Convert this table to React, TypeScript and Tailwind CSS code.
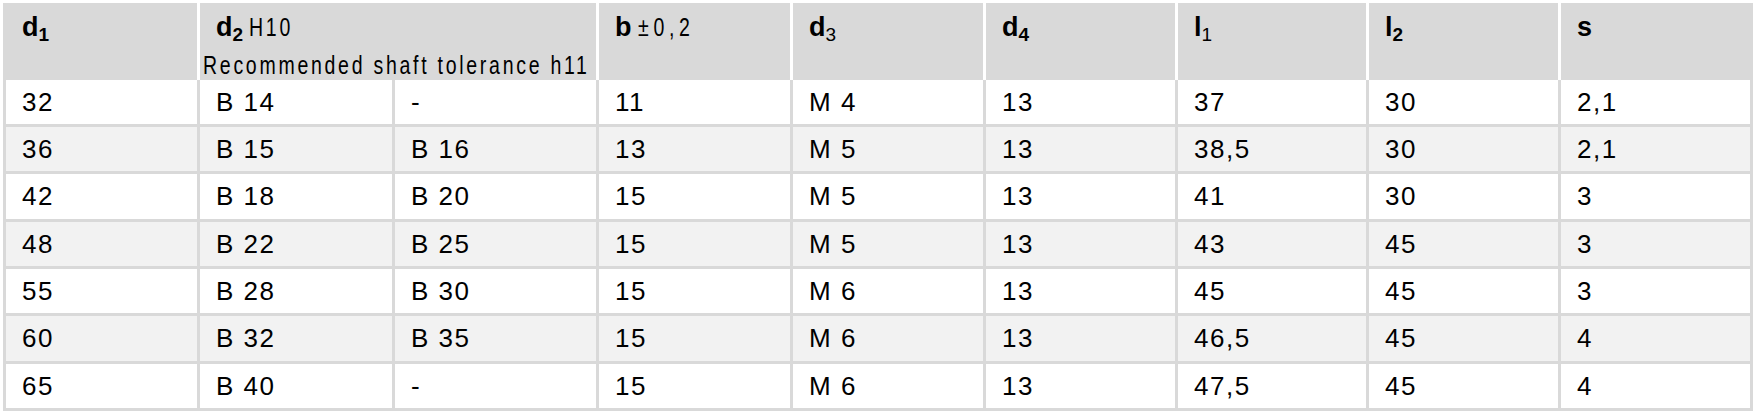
const rows = [
  ["32", "B 14", "-", "11", "M 4", "13", "37", "30", "2,1"],
  ["36", "B 15", "B 16", "13", "M 5", "13", "38,5", "30", "2,1"],
  ["42", "B 18", "B 20", "15", "M 5", "13", "41", "30", "3"],
  ["48", "B 22", "B 25", "15", "M 5", "13", "43", "45", "3"],
  ["55", "B 28", "B 30", "15", "M 6", "13", "45", "45", "3"],
  ["60", "B 32", "B 35", "15", "M 6", "13", "46,5", "45", "4"],
  ["65", "B 40", "-", "15", "M 6", "13", "47,5", "45", "4"],
];

// row heights alternate a little so the lines fall where the drawing has them
const rowH = ["h-[47px]", "h-[47px]", "h-[48px]", "h-[47px]", "h-[47px]", "h-[48px]", "h-[47px]"];

const sans = "font-['Liberation_Sans',Arial,sans-serif]";
// condensed look for the tolerance notes
const narrow = `${sans} inline-block origin-left scale-x-[0.78] font-normal text-[25px] whitespace-nowrap`;

function Sym({ main, sub, subBold = true }: { main: string; sub?: string; subBold?: boolean }) {
  return (
    <span className={`${sans} font-bold text-[27px]`}>
      {main}
      {sub && <sub className={`text-[19px] ${subBold ? "font-bold" : "font-normal"}`}>{sub}</sub>}
    </span>
  );
}

export default function App() {
  const headCell = "h-[77px] bg-[#d9d9d9] border-r-[3px] border-white pt-[7px] leading-[34px] text-black";
  return (
    <div className="w-[1758px] h-[417px] bg-white p-[3px]">
      <div className="grid grid-cols-[197px_195px_204px_194px_193px_192px_191px_192px_192px]">
        {/* header */}
        <div className={`${headCell} pl-[19px]`}>
          <Sym main="d" sub="1" />
        </div>
        <div className={`${headCell} col-span-2 pl-[3px]`}>
          <div className="pl-[13px] whitespace-nowrap">
            <Sym main="d" sub="2" />
            <span className={`${narrow} tracking-[3.5px] ml-[6px]`}>H10</span>
          </div>
          <div className={`${narrow} tracking-[3.5px] leading-[26px] mt-[5px]`}>Recommended shaft tolerance h11</div>
        </div>
        <div className={`${headCell} pl-[16px] whitespace-nowrap`}>
          <Sym main="b" />
          <span className={`${narrow} tracking-[6px] ml-[6px]`}>±0,2</span>
        </div>
        <div className={`${headCell} pl-[16px]`}>
          <Sym main="d" sub="3" subBold={false} />
        </div>
        <div className={`${headCell} pl-[16px]`}>
          <Sym main="d" sub="4" />
        </div>
        <div className={`${headCell} pl-[16px]`}>
          <Sym main="l" sub="1" subBold={false} />
        </div>
        <div className={`${headCell} pl-[16px]`}>
          <Sym main="l" sub="2" />
        </div>
        <div className="h-[77px] bg-[#d9d9d9] pl-[16px] pt-[7px] leading-[34px]">
          <Sym main="s" />
        </div>

        {/* body */}
        {rows.map((r, i) =>
          r.map((v, j) => (
            <div
              key={`${i}-${j}`}
              className={`${rowH[i]} flex items-center pl-[16px] border-b-[3px] border-r-[3px] border-[#d9d9d9] ${
                j === 0 ? "border-l-[3px]" : ""
              } ${i % 2 === 1 ? "bg-[#f2f2f2]" : "bg-white"} ${sans} text-[26px] tracking-[1.5px] text-black`}
            >
              {v}
            </div>
          ))
        )}
      </div>
    </div>
  );
}
